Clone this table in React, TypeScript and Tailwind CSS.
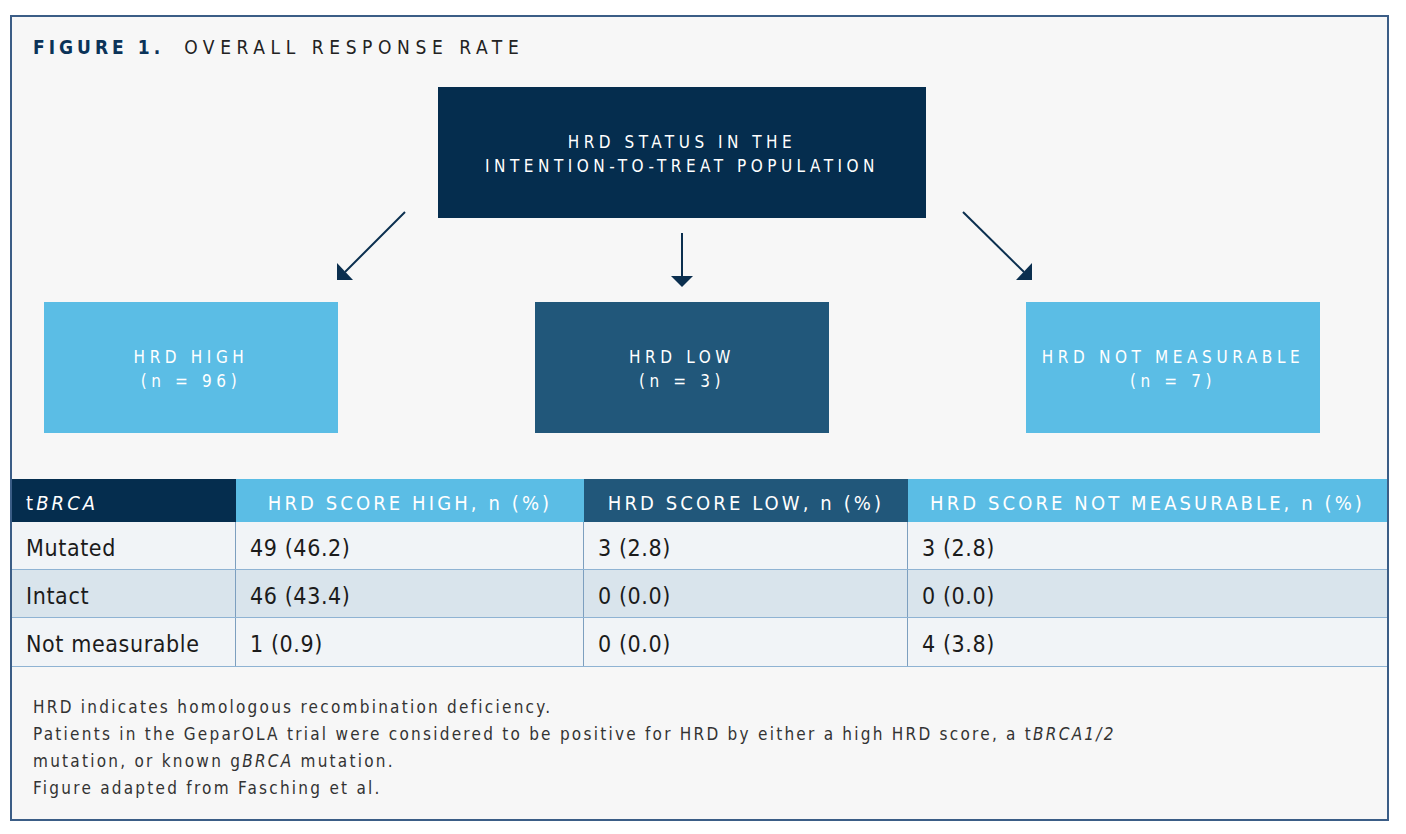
const font = "font-['Liberation_Sans_Narrow','DejaVu_Sans_Condensed','Liberation_Sans',sans-serif]"

const headers = [
  { label: "HRD SCORE HIGH, n (%)", bg: "bg-[#5bbde5]", w: "w-[348px]" },
  { label: "HRD SCORE LOW, n (%)", bg: "bg-[#21577a]", w: "w-[324px]" },
  { label: "HRD SCORE NOT MEASURABLE, n (%)", bg: "bg-[#5bbde5]", w: "flex-1" },
]

const rows = [
  { name: "Mutated", values: ["49 (46.2)", "3 (2.8)", "3 (2.8)"], bg: "bg-[#f1f4f7]" },
  { name: "Intact", values: ["46 (43.4)", "0 (0.0)", "0 (0.0)"], bg: "bg-[#d9e4ec]" },
  { name: "Not measurable", values: ["1 (0.9)", "0 (0.0)", "4 (3.8)"], bg: "bg-[#f1f4f7]" },
]

const boxes = [
  { title: "HRD HIGH", n: "(n = 96)", bg: "bg-[#5bbde5]" },
  { title: "HRD LOW", n: "(n = 3)", bg: "bg-[#21577a]" },
  { title: "HRD NOT MEASURABLE", n: "(n = 7)", bg: "bg-[#5bbde5]" },
]

const colW = ["w-[348px]", "w-[324px]", "flex-1"]

function Arrows() {
  return (
    <svg width="1375" height="84" viewBox="12 218 1375 84" overflow="visible" className="block">
      <g stroke="#0b2f4f" strokeWidth="2" fill="#0b2f4f">
        <line x1="405" y1="212" x2="345" y2="272" />
        <polygon points="337,263 337,280 353,280" stroke="none" />
        <line x1="682" y1="233" x2="682" y2="277" />
        <polygon points="671,276 693,276 682,287" stroke="none" />
        <line x1="963" y1="212" x2="1024" y2="272" />
        <polygon points="1032,263 1032,280 1016,280" stroke="none" />
      </g>
    </svg>
  )
}

export default function App() {
  return (
    <div className={`w-[1406px] h-[834px] bg-white pt-[15px] pl-[10px] ${font}`}>
      <div className="w-[1379px] h-[806px] border-2 border-[#3b5d86] bg-[#f7f7f7] flex flex-col">
        {/* title */}
        <div className="h-[70px] pt-[18px] pl-[21px] text-[19px] leading-[24px]">
          <span className="font-bold text-[#0b3358] tracking-[4px]">FIGURE 1.</span>
          <span className="ml-[20px] text-[#222] tracking-[5.6px]">OVERALL RESPONSE RATE</span>
        </div>

        {/* top box */}
        <div className="ml-[426px] w-[488px] h-[131px] bg-[#052d4e] flex flex-col items-center justify-center pt-[3px] text-white text-[17px] leading-[24px] tracking-[4.5px] text-center">
          <div>HRD STATUS IN THE</div>
          <div>INTENTION-TO-TREAT POPULATION</div>
        </div>

        <Arrows />

        {/* status boxes */}
        <div className="flex gap-[197px] pl-[32px]">
          {boxes.map((b) => (
            <div
              key={b.title}
              className={`w-[294px] h-[131px] ${b.bg} flex flex-col items-center justify-center pt-[3px] text-white text-[17px] leading-[24px] tracking-[4.6px] text-center`}
            >
              <div>{b.title}</div>
              <div>{b.n}</div>
            </div>
          ))}
        </div>

        {/* table */}
        <div className="mt-[46px] border-b border-[#8fb3d3]">
          <div className="flex h-[43px] text-white text-[20px] tracking-[3.1px] pt-[4px]">
            <div className="w-[224px] bg-[#052d4e] flex items-center pl-[14px] -mt-[4px] pt-[4px]">
              t<i>BRCA</i>
            </div>
            {headers.map((h) => (
              <div key={h.label} className={`${h.w} ${h.bg} flex items-center justify-center -mt-[4px] pt-[4px]`}>
                {h.label}
              </div>
            ))}
          </div>
          {rows.map((r, ri) => (
            <div
              key={r.name}
              className={`flex h-[48px] ${r.bg} ${ri < 2 ? "border-b border-[#8fb3d3]" : ""} text-[23px] tracking-[0.6px] text-[#1b1b1b]`}
            >
              <div className="w-[224px] flex items-center pl-[14px] pt-[5px] border-r border-[#7d9fbf]">{r.name}</div>
              {r.values.map((v, i) => (
                <div
                  key={i}
                  className={`${colW[i]} flex items-center pl-[14px] pt-[5px] ${i < 2 ? "border-r border-[#7d9fbf]" : ""}`}
                >
                  {v}
                </div>
              ))}
            </div>
          ))}
        </div>

        {/* footnotes */}
        <div className="pt-[27px] pl-[21px] text-[17px] leading-[27px] tracking-[2.25px] text-[#333]">
          <div>HRD indicates homologous recombination deficiency.</div>
          <div>
            Patients in the GeparOLA trial were considered to be positive for HRD by either a high HRD score, a t<i>BRCA1/2</i>
          </div>
          <div>
            mutation, or known g<i>BRCA</i> mutation.
          </div>
          <div>Figure adapted from Fasching et al.</div>
        </div>
      </div>
    </div>
  )
}
